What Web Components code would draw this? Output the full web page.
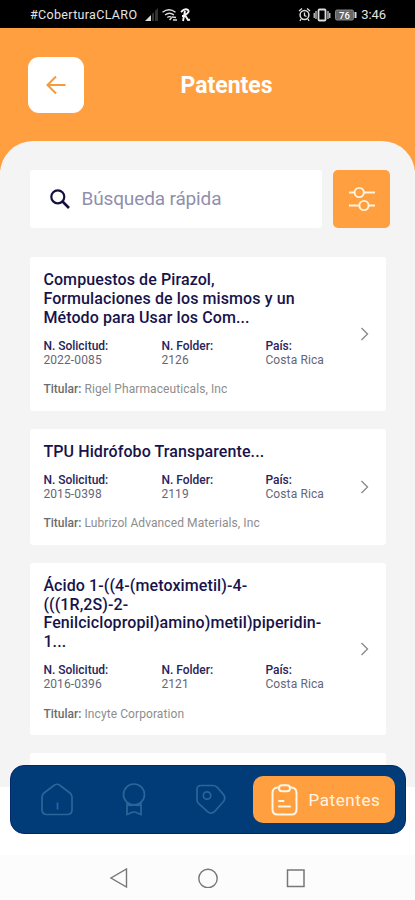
<!DOCTYPE html>
<html lang="es">
<head>
<meta charset="utf-8">
<title>Patentes</title>
<style>
html,body{margin:0;height:100%;overflow:hidden}
body{font-family:Roboto,"Liberation Sans",sans-serif;background:#fff}
</style>
</head>
<body>
<patent-app></patent-app>
<script>
const define = (name, html, setup) => customElements.define(name, class extends HTMLElement {
  connectedCallback() {
    if (this.shadowRoot) return;
    const t = document.createElement('template');
    t.innerHTML = html;
    this.attachShadow({ mode: 'open' }).append(t.content.cloneNode(true));
    if (setup) setup(this, this.shadowRoot);
  }
});

define('status-bar', `
<style>
:host{display:flex;height:28px;box-sizing:border-box;background:#000;color:#e4e4e4;font-size:12.500px;line-height:28px;padding:1px 29px 0 30px;align-items:center;justify-content:space-between;flex:none}
div{display:flex;align-items:center}
svg{display:block;flex:none}
.carrier{width:108px;margin-right:7px;white-space:nowrap;letter-spacing:.33px}
.time{margin-left:3px;font-size:13px;letter-spacing:-.05px}
</style>
<div><span class="carrier">#CoberturaCLARO</span>
<svg width="48" height="16" viewBox="0 0 48 16" fill="none">
<path d="M6 8v6H0z" fill="#ddd"/><path d="M7 7l2-2v9H7zM10 4l3-3v13h-3z" fill="#333"/>
<path d="M17.500 5.200q6.500-5 13 0M20 8q4.500-3.500 9 0M22.300 10.500q2.200-1.700 4.500 0" stroke="#ddd" stroke-width="1.400"/><path d="M24.500 13l2-2M27 10l4 .5M28 13h4" stroke="#ddd" stroke-width="1.500"/>
<path d="M36 5q4-4 7-2 2 2-3 5l3 5 2-.3M40 4l-2 10M37 9h4" stroke="#f5f5f5" stroke-width="1.900"/>
</svg></div>
<div><svg width="60" height="16" viewBox="0 0 60 16" fill="none" stroke="#ddd">
<circle cx="6.500" cy="8" r="4.400" stroke-width="1.500"/><path d="M1 4l3-2.500M9 1.500L12 4M6.500 5.500v3l2 1M3 12l-1 2M10 12l1 2" stroke-width="1.300"/>
<rect x="20.500" y="2.500" width="7" height="11" rx="1" stroke-width="1.800"/><path d="M18 4v8M16.200 6v5M30 4v8M31.800 6v5" stroke-width="1.200"/>
<rect x="37.500" y="3" width="18" height="10" rx="1.500" fill="#666" stroke="#888"/><path d="M57.500 5v6" stroke-width="2"/>
<text x="46.500" y="11.500" font-size="9.500" font-weight="500" fill="#fff" stroke="none" text-anchor="middle">76</text>
</svg><span class="time">3:46</span></div>`);

define('top-bar', `
<style>
:host{display:grid;grid-template-columns:56px 1fr;height:113px;box-sizing:border-box;padding:29px 17px 0 28px;color:#fff}
.back{width:56px;height:56px;border-radius:11px;background:#fff;display:grid;place-items:center;box-sizing:border-box}
h1{margin:0;padding-right:29px;font-size:23px;font-weight:700;line-height:57px;text-align:center}
</style>
<div class="back"><svg width="22" height="22" viewBox="0 0 22 22" fill="none" stroke="#f39a3c" stroke-width="2"><path d="M20.500 11H3M11 2.500L2.500 11l8.500 8.500"/></svg></div>
<h1><slot></slot></h1>`);

define('search-row', `
<style>
:host{display:flex;gap:11px;height:58px}
.field{flex:1;background:#fff;border-radius:3px;display:flex;align-items:center;gap:11.500px;padding-left:20px;font-size:19px;color:#8f8fae;letter-spacing:-.14px}
.field span{padding-bottom:2px}
.filter{width:57px;background:#ff9f40;border-radius:5px;display:grid;place-items:center}
svg{display:block}
</style>
<div class="field"><svg width="20" height="20" viewBox="0 0 20 20" fill="none" stroke="#15113f" stroke-width="2.200"><circle cx="7.800" cy="7.800" r="6.500"/><path d="M12.500 12.500l6.500 6.500" stroke-width="2.600"/></svg><span><slot></slot></span></div>
<div class="filter"><svg width="28" height="28" viewBox="0 0 28 28" fill="none" stroke="#fff4dc" stroke-width="1.900"><path d="M1 7.500h5.500M16 7.500h11M1 20.500h10M21 20.500h6"/><circle cx="11.200" cy="7.500" r="4.600"/><circle cx="16" cy="20.500" r="4.600"/></svg></div>`);

define('patent-card', `
<style>
:host{display:grid;grid-template-columns:1fr 15px;background:#fff;border-radius:3px;padding:14px 14px 14px 13.400px;align-items:center}
h2{margin:0 0 11.300px;font-size:16px;line-height:18.750px;font-weight:500;color:#17134a;letter-spacing:.1px;white-space:pre-line}
dl{margin:0;display:grid;grid-template-columns:118px 104px 1fr;font-size:12px;line-height:14.300px;letter-spacing:.12px}
dt{font-weight:500;color:#28245a;letter-spacing:-.01px}
dd{margin:0;color:#666676}
p{margin:15.200px 0 0;font-size:12px;line-height:14.300px;color:#8d8d8d;letter-spacing:.09px;white-space:nowrap}
b{font-weight:500;color:#6c6c6c;letter-spacing:0}
svg{display:block;justify-self:center}
</style>
<div><h2></h2>
<dl><div><dt>N. Solicitud:</dt><dd class="req"></dd></div><div><dt>N. Folder:</dt><dd class="folder"></dd></div><div><dt>País:</dt><dd>Costa Rica</dd></div></dl>
<p><b>Titular:</b> <slot></slot></p></div>
<svg width="9" height="14" viewBox="0 0 9 14" fill="none" stroke="#8b8b8b" stroke-width="1.400"><path d="M1.500 1l6 6-6 6"/></svg>`,
(el, root) => {
  root.querySelector('h2').textContent = el.getAttribute('heading').replaceAll('|', '\n');
  root.querySelector('.req').textContent = el.getAttribute('request');
  root.querySelector('.folder').textContent = el.getAttribute('folder');
});

define('tab-bar', `
<style>
:host{display:grid;grid-template-columns:77px 77px 77px 142px;align-items:center;box-sizing:border-box;height:69px;border-radius:14px;background:#023c78;border:1px solid #002a70;padding:0 10px 0 7px;justify-content:start}
svg{display:block;justify-self:center}
.on{display:flex;align-items:center;box-sizing:border-box;width:142px;margin-left:4px;height:47px;background:#ff9f40;border-radius:10px;color:#fff5e4;font-size:17px;letter-spacing:.6px;font-weight:400;padding-left:18px;gap:10.500px}
</style>
<svg width="34" height="34" viewBox="0 0 34 34" fill="none" stroke="#2c659a" stroke-width="1.700"><path d="M4 10L14.500 2Q17 .500 19.500 2L30 10Q32 11.500 32 14V26.500Q32 31.500 27 31.500H7Q2 31.500 2 26.500V14Q2 11.500 4 10zM17.500 19.500v7"/></svg>
<svg width="34" height="34" viewBox="0 0 34 34" fill="none" stroke="#2c659a" stroke-width="1.700"><circle cx="17" cy="11.500" r="10.500"/><path d="M10 20V31.500l3.500-1.500q3.500-2 7 0L24 31.500V20M10 21.500q3.500 2 7 0 3.500 2 7 0"/></svg>
<svg width="34" height="34" viewBox="0 0 34 34" fill="none" stroke="#2c659a" stroke-width="1.700"><path d="M7 2.500h11.500q2.500 0 4.500 1.700l6.500 7.300q2.500 3.500 0 7L20.500 28.700q-3.500 2.800-7 0L4.500 20.500Q3 19 3 16.500V6.500q0-4 4-4z"/><circle cx="13" cy="12.500" r="3.700"/></svg>
<div class="on"><svg width="27" height="32" viewBox="0 0 27 32" fill="none" stroke="#fff7e6" stroke-width="2" stroke-linecap="round"><path d="M7.500 3.500H6Q1.500 4 1.500 9v16.500q0 5 5 5h14q5 0 5-5V9q0-5-4.500-5.500h-1.500"/><rect x="8" y="1.200" width="11" height="6" rx="3"/><path d="M8 17h4.500M8 22.500h11"/></svg><slot></slot></div>`);

define('system-nav', `
<style>
:host{display:flex;height:45px;background:#fcfcfc;align-items:center;padding:0 109px;justify-content:space-between}
svg{display:block}
</style>
<svg width="20" height="20" viewBox="0 0 20 20" fill="none" stroke="#777" stroke-width="1.400"><path d="M17.500 1v18L2 10z"/></svg>
<svg width="20" height="20" viewBox="0 0 20 20" fill="none" stroke="#777" stroke-width="1.400"><circle cx="10" cy="10.500" r="9.200"/></svg>
<svg width="20" height="20" viewBox="0 0 20 20" fill="none" stroke="#777" stroke-width="1.500"><rect x="1.500" y="2" width="16.500" height="16.500"/></svg>`);

define('patent-app', `
<style>
:host{display:flex;flex-direction:column;height:900px;width:415px;overflow:hidden;background:linear-gradient(#ff9f40 0 170px,#f4f4f4 170px 787px,#fff 787px)}
main{height:617px;box-sizing:border-box;background:#f4f4f4;border-radius:33px 33px 0 0;padding:29px 25px 0 30px;flex:none}
.list{display:flex;flex-direction:column;gap:18px;padding:0 4px 0 0;margin-top:29px}
.peek{height:20px;background:#fff;border-radius:3px}
tab-bar{margin:7px 9px 21px 10px;flex:none}
top-bar,system-nav{flex:none}
</style>
<status-bar></status-bar>
<top-bar>Patentes</top-bar>
<main>
<search-row>Búsqueda rápida</search-row>
<div class="list">
<patent-card heading="Compuestos de Pirazol,|Formulaciones de los mismos y un|Método para Usar los Com..." request="2022-0085" folder="2126">Rigel Pharmaceuticals, Inc</patent-card>
<patent-card heading="TPU Hidrófobo Transparente..." request="2015-0398" folder="2119">Lubrizol Advanced Materials, Inc</patent-card>
<patent-card heading="Ácido 1-((4-(metoximetil)-4-|(((1R,2S)-2-|Fenilciclopropil)amino)metil)piperidin-|1..." request="2016-0396" folder="2121">Incyte Corporation</patent-card>
<div class="peek"></div>
</div>
</main>
<tab-bar>Patentes</tab-bar>
<system-nav></system-nav>`);
</script>
</body>
</html>
